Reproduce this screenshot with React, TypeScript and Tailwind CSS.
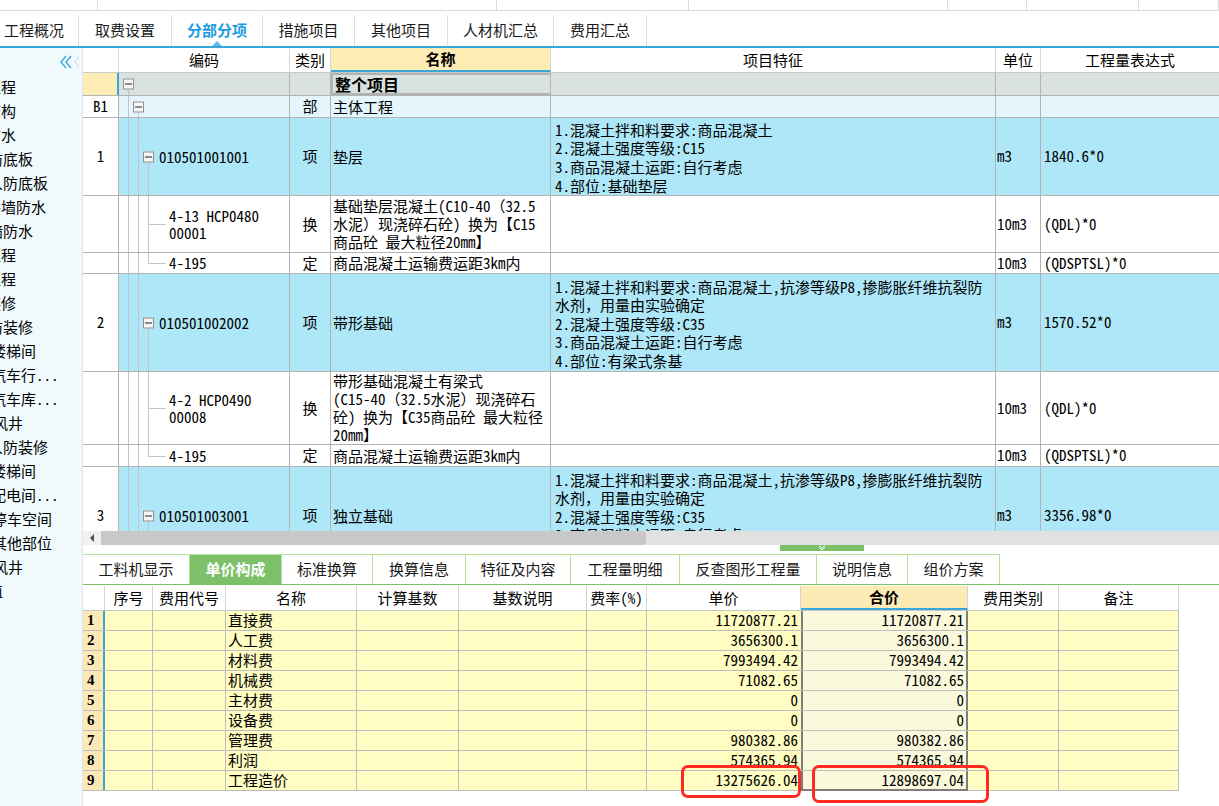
import React from 'react';

const topStrip = ['w-[98px]', 'w-[399px]', 'w-[192px]', 'w-[259px]', 'w-[79px]', 'w-[112px]', 'w-[80px]'];

const topTabs = [
  { label: '工程概况', cls: 'w-[89px] -ml-[10px]' },
  { label: '取费设置', cls: 'w-[93px]' },
  { label: '分部分项', cls: 'w-[91px]', active: true },
  { label: '措施项目', cls: 'w-[92px]' },
  { label: '其他项目', cls: 'w-[93px]' },
  { label: '人材机汇总', cls: 'w-[106px]' },
  { label: '费用汇总', cls: 'w-[93px]' },
];

const sideItems: [string, string][] = [
  ['工程', '-ml-[14px]'], ['结构', '-ml-[14px]'], ['防水', '-ml-[14px]'], ['防底板', '-ml-[12px]'],
  ['人防底板', '-ml-[12px]'], ['外墙防水', '-ml-[14px]'], ['墙防水', '-ml-[12px]'], ['工程', '-ml-[14px]'],
  ['工程', '-ml-[14px]'], ['装修', '-ml-[14px]'], ['防装修', '-ml-[12px]'], ['楼梯间', '-ml-[9px]'],
  ['汽车行...', '-ml-[9px]'], ['汽车库...', '-ml-[9px]'], ['风井', '-ml-[7px]'], ['人防装修', '-ml-[12px]'],
  ['楼梯间', '-ml-[9px]'], ['配电间...', '-ml-[9px]'], ['停车空间', '-ml-[8px]'], ['其他部位', '-ml-[8px]'],
  ['风井', '-ml-[7px]'], ['值', '-ml-[12px]'],
];

const bottomTabs = [
  { label: '工料机显示', w: 'w-[107px]' },
  { label: '单价构成', w: 'w-[92px]', active: true },
  { label: '标准换算', w: 'w-[91px]' },
  { label: '换算信息', w: 'w-[93px]' },
  { label: '特征及内容', w: 'w-[105px]' },
  { label: '工程量明细', w: 'w-[109px]' },
  { label: '反查图形工程量', w: 'w-[137px]' },
  { label: '说明信息', w: 'w-[91px]' },
  { label: '组价方案', w: 'w-[92px]' },
];

const costRows = [
  ['直接费', '11720877.21', '11720877.21'],
  ['人工费', '3656300.1', '3656300.1'],
  ['材料费', '7993494.42', '7993494.42'],
  ['机械费', '71082.65', '71082.65'],
  ['主材费', '0', '0'],
  ['设备费', '0', '0'],
  ['管理费', '980382.86', '980382.86'],
  ['利润', '574365.94', '574365.94'],
  ['工程造价', '13275626.04', '12898697.04'],
];

const featC35 = [
  '1.混凝土拌和料要求:商品混凝土,抗渗等级P8,掺膨胀纤维抗裂防',
  '水剂，用量由实验确定',
  '2.混凝土强度等级:C35',
  '3.商品混凝土运距:自行考虑',
];

type V = 'full' | 'down' | 'up' | null;

function MinusBox({ left }: { left: string }) {
  return (
    <span className={`absolute ${left} top-1/2 -translate-y-1/2 w-[11px] h-[11px] border border-[#8e8e8e] bg-[#f6f6f6] flex items-center justify-center`}>
      <span className="w-[7px] h-px bg-[#222]" />
    </span>
  );
}

function Tree({ v, box, hook, pl, children }: { v: V[]; box?: string; hook?: boolean; pl: string; children?: React.ReactNode }) {
  const xs = ['left-[9px]', 'left-[19px]', 'left-[29px]'];
  return (
    <div className="relative w-[171px] shrink-0 h-full border-r border-[#b3b3b3]">
      {v.map((m, i) =>
        m ? (
          <span
            key={i}
            className={`absolute w-px bg-[#c4c4c4] ${xs[i]} ${m === 'full' ? 'top-0 bottom-0' : m === 'down' ? 'top-1/2 bottom-0' : 'top-0 bottom-1/2'}`}
          />
        ) : null
      )}
      {hook && <span className="absolute left-[29px] top-1/2 w-[18px] h-px bg-[#c4c4c4]" />}
      {box && <MinusBox left={box} />}
      <div className={`h-full flex flex-col justify-center leading-[17.5px] whitespace-nowrap ${pl}`}>{children}</div>
    </div>
  );
}

function Row({
  h, bg, num, numCls = 'bg-white', tree, kind, name, nameCls = '', feat = [], unit = '', expr = '',
}: {
  h: string; bg: string; num: string; numCls?: string; tree: React.ReactNode; kind: string;
  name: React.ReactNode; nameCls?: string; feat?: string[]; unit?: string; expr?: string;
}) {
  return (
    <div className={`flex shrink-0 border-b border-[#b3b3b3] ${h} ${bg}`}>
      <div className={`w-[36px] shrink-0 h-full border-r border-[#b3b3b3] flex items-center justify-center ${numCls}`}>{num}</div>
      {tree}
      <div className="w-[41px] shrink-0 h-full border-r border-[#b3b3b3] flex items-center justify-center">{kind}</div>
      <div className={`w-[220px] shrink-0 h-full border-r border-[#b3b3b3] flex flex-col justify-center pl-[2px] leading-[18px] whitespace-nowrap overflow-hidden ${nameCls}`}>{name}</div>
      <div className="w-[445px] shrink-0 h-full border-r border-[#b3b3b3] flex flex-col justify-center pl-[4px] pt-[3px] leading-[18.6px] whitespace-nowrap overflow-hidden">
        {feat.map((f, i) => (
          <div key={i}>{f}</div>
        ))}
      </div>
      <div className="w-[45px] shrink-0 h-full border-r border-[#b3b3b3] flex items-center pl-[1px]">{unit}</div>
      <div className="w-[200px] shrink-0 h-full flex items-center pl-[3px] whitespace-nowrap">{expr}</div>
    </div>
  );
}

export default function App() {
  return (
    <div className="relative w-[1219px] h-[806px] overflow-hidden bg-white text-[15px] text-black font-['Noto_Sans_Mono_CJK_SC','Noto_Sans_CJK_SC',sans-serif]">
      {/* toolbar remains */}
      <div className="flex h-[11px] border-b border-[#dadada]">
        {topStrip.map((w, i) => (
          <div key={i} className={`${w} h-full border-r border-[#dcdcdc]`} />
        ))}
      </div>

      {/* top tabs */}
      <div className="flex h-[37px] border-b-2 border-[#3aa7db] overflow-hidden">
        {topTabs.map((t) => (
          <div
            key={t.label}
            className={`relative ${t.cls} shrink-0 mt-[4px] h-[31px] border-r border-[#dedede] flex items-center justify-center ${t.active ? 'text-[#1b9ce0] font-bold' : 'text-[#1a1a1a]'}`}
          >
            {t.label}
            {t.active && (
              <span className="absolute bottom-0 left-1/2 -translate-x-1/2 border-x-[5px] border-x-transparent border-b-[5px] border-b-[#5fb9e5]" />
            )}
          </div>
        ))}
      </div>

      <div className="flex h-[758px]">
        {/* left tree panel */}
        <aside className="w-[83px] shrink-0 h-full bg-[#f0fafd] border-r border-[#dde7eb] overflow-hidden pt-[7px]">
          <div className="flex justify-end pr-[1px] h-[14px]">
            <svg width="22" height="14" viewBox="0 0 22 14" fill="none">
              <polyline points="7,1 2,7 7,13" stroke="#3aa7db" strokeWidth="1.4" />
              <polyline points="12,1 7,7 12,13" stroke="#3aa7db" strokeWidth="1.4" />
              <polyline points="20,2 16,7 20,12" stroke="#d3dcdf" strokeWidth="1.2" />
            </svg>
          </div>
          <div className="mt-[6px]">
            {sideItems.map(([txt, ml], i) => (
              <div key={i} className={`h-[24px] leading-[24px] whitespace-nowrap ${ml}`}>
                {txt}
              </div>
            ))}
          </div>
        </aside>

        <main className="flex-1 min-w-0 flex flex-col">
          {/* main grid */}
          <div className="h-[483px] overflow-hidden flex flex-col">
            <div className="flex shrink-0 h-[25px] bg-white border-b border-[#c9c9c9]">
              <div className="w-[36px] shrink-0 border-r border-[#d6d6d6]" />
              <div className="w-[171px] shrink-0 border-r border-[#d6d6d6] flex items-center justify-center">编码</div>
              <div className="w-[41px] shrink-0 border-r border-[#d6d6d6] flex items-center justify-center">类别</div>
              <div className="w-[220px] shrink-0 border-r border-[#d6d6d6] flex items-center justify-center font-bold bg-[#fdedb5] border-b-2 border-b-[#3aa7db]">名称</div>
              <div className="w-[445px] shrink-0 border-r border-[#d6d6d6] flex items-center justify-center">项目特征</div>
              <div className="w-[45px] shrink-0 border-r border-[#d6d6d6] flex items-center justify-center">单位</div>
              <div className="w-[200px] shrink-0 flex items-center justify-center pr-[22px]">工程量表达式</div>
            </div>

            <Row
              h="h-[23px]"
              bg="bg-[#d9e2de]"
              num=""
              numCls="bg-[#fdedb5] border-r-2 border-r-[#3aa7db]"
              tree={<Tree v={['down', null, null]} box="left-[4px]" pl="pl-[40px]" />}
              kind=""
              name="整个项目"
              nameCls="font-bold text-[16px] border-2 border-[#6f6f6f]"
            />
            <Row
              h="h-[22px]"
              bg="bg-[#e4f6fb]"
              num="B1"
              tree={<Tree v={['full', 'down', null]} box="left-[14px]" pl="pl-[40px]" />}
              kind="部"
              name="主体工程"
            />
            <Row
              h="h-[78px]"
              bg="bg-[#aee7f8]"
              num="1"
              tree={<Tree v={['full', 'full', 'down']} box="left-[24px]" pl="pl-[40px]">010501001001</Tree>}
              kind="项"
              name="垫层"
              feat={['1.混凝土拌和料要求:商品混凝土', '2.混凝土强度等级:C15', '3.商品混凝土运距:自行考虑', '4.部位:基础垫层']}
              unit="m3"
              expr="1840.6*0"
            />
            <Row
              h="h-[57px]"
              bg="bg-white"
              num=""
              tree={
                <Tree v={['full', 'full', 'full']} hook pl="pl-[50px]">
                  <div>4-13 HCP0480</div>
                  <div>00001</div>
                </Tree>
              }
              kind="换"
              name={
                <>
                  <div>基础垫层混凝土(C10-40（32.5</div>
                  <div>水泥）现浇碎石砼) 换为【C15</div>
                  <div>商品砼 最大粒径20mm】</div>
                </>
              }
              unit="10m3"
              expr="(QDL)*0"
            />
            <Row
              h="h-[21px]"
              bg="bg-white"
              num=""
              tree={<Tree v={['full', 'full', 'up']} hook pl="pl-[50px]">4-195</Tree>}
              kind="定"
              name="商品混凝土运输费运距3km内"
              unit="10m3"
              expr="(QDSPTSL)*0"
            />
            <Row
              h="h-[98px]"
              bg="bg-[#aee7f8]"
              num="2"
              tree={<Tree v={['full', 'full', 'down']} box="left-[24px]" pl="pl-[40px]">010501002002</Tree>}
              kind="项"
              name="带形基础"
              feat={[...featC35, '4.部位:有梁式条基']}
              unit="m3"
              expr="1570.52*0"
            />
            <Row
              h="h-[73px]"
              bg="bg-white"
              num=""
              tree={
                <Tree v={['full', 'full', 'full']} hook pl="pl-[50px]">
                  <div>4-2 HCP0490</div>
                  <div>00008</div>
                </Tree>
              }
              kind="换"
              name={
                <>
                  <div>带形基础混凝土有梁式</div>
                  <div>(C15-40（32.5水泥）现浇碎石</div>
                  <div>砼) 换为【C35商品砼 最大粒径</div>
                  <div>20mm】</div>
                </>
              }
              unit="10m3"
              expr="(QDL)*0"
            />
            <Row
              h="h-[22px]"
              bg="bg-white"
              num=""
              tree={<Tree v={['full', 'full', 'up']} hook pl="pl-[50px]">4-195</Tree>}
              kind="定"
              name="商品混凝土运输费运距3km内"
              unit="10m3"
              expr="(QDSPTSL)*0"
            />
            <Row
              h="h-[98px]"
              bg="bg-[#aee7f8]"
              num="3"
              tree={<Tree v={['full', 'full', 'down']} box="left-[24px]" pl="pl-[40px]">010501003001</Tree>}
              kind="项"
              name="独立基础"
              feat={[...featC35, '4.部位:独立基础']}
              unit="m3"
              expr="3356.98*0"
            />
          </div>

          {/* horizontal scrollbar */}
          <div className="flex h-[14px] shrink-0 bg-[#e1e1e1]">
            <div className="w-[18px] h-full bg-[#f1f1f1] flex items-center justify-center">
              <span className="border-y-[4px] border-y-transparent border-r-[4px] border-r-[#505050]" />
            </div>
            <div className="w-[545px] h-full bg-[#c8c8c8] rounded-r-[3px]" />
          </div>

          {/* splitter */}
          <div className="h-[9px] shrink-0">
            <div className="ml-[697px] w-[84px] h-[6px] bg-[#7cc169] flex justify-center">
              <svg width="10" height="6" viewBox="0 0 10 6" fill="none">
                <polyline points="2,0.5 5,3 8,0.5" stroke="#ffffff" strokeWidth="1" />
                <polyline points="2,2.5 5,5 8,2.5" stroke="#ffffff" strokeWidth="1" />
              </svg>
            </div>
          </div>

          {/* bottom tabs */}
          <div className="flex h-[31px] shrink-0 border-b border-[#7cc169]">
            {bottomTabs.map((t) => (
              <div
                key={t.label}
                className={`${t.w} shrink-0 h-full flex items-center justify-center border-t border-r border-[#b3e1a1] ${t.active ? 'bg-[#7cc169] text-white font-bold' : 'text-[#1a1a1a]'}`}
              >
                {t.label}
              </div>
            ))}
          </div>

          {/* unit price composition grid */}
          <div className="mt-[1px] w-[1096px]">
            <div className="flex h-[25px] border-b border-[#c6c6c6]">
              <div className="w-[22px] shrink-0 border-r border-[#d4d4d4]" />
              <div className="w-[48px] shrink-0 border-r border-[#d4d4d4] flex items-center justify-center">序号</div>
              <div className="w-[73px] shrink-0 border-r border-[#d4d4d4] flex items-center justify-center">费用代号</div>
              <div className="w-[131px] shrink-0 border-r border-[#d4d4d4] flex items-center justify-center">名称</div>
              <div className="w-[102px] shrink-0 border-r border-[#d4d4d4] flex items-center justify-center">计算基数</div>
              <div className="w-[128px] shrink-0 border-r border-[#d4d4d4] flex items-center justify-center">基数说明</div>
              <div className="w-[60px] shrink-0 border-r border-[#d4d4d4] flex items-center justify-center whitespace-nowrap">费率(%)</div>
              <div className="w-[154px] shrink-0 border-r border-[#d4d4d4] flex items-center justify-center">单价</div>
              <div className="w-[167px] shrink-0 border-r border-[#d4d4d4] flex items-center justify-center font-bold bg-[#fdebb5] border-b-2 border-b-[#3aa7db]">合价</div>
              <div className="w-[91px] shrink-0 border-r border-[#d4d4d4] flex items-center justify-center">费用类别</div>
              <div className="w-[120px] shrink-0 border-r border-[#d4d4d4] flex items-center justify-center">备注</div>
            </div>
            {costRows.map(([name, unit, total], i) => (
              <div key={i} className="flex h-[20px] bg-[#fffdc2] border-b border-[#bdbdbd]">
                <div className="w-[22px] shrink-0 h-full bg-[#fde8b8] border-r-2 border-r-[#3aa3d8] pl-[4px] flex items-center font-bold font-['Liberation_Serif',serif]">
                  {i + 1}
                </div>
                <div className="w-[48px] shrink-0 border-r border-[#bdbdbd]" />
                <div className="w-[73px] shrink-0 border-r border-[#bdbdbd]" />
                <div className="w-[131px] shrink-0 border-r border-[#bdbdbd] pl-[2px] flex items-center">{name}</div>
                <div className="w-[102px] shrink-0 border-r border-[#bdbdbd]" />
                <div className="w-[128px] shrink-0 border-r border-[#bdbdbd]" />
                <div className="w-[60px] shrink-0 border-r border-[#bdbdbd]" />
                <div className="w-[154px] shrink-0 flex items-center justify-end pr-[3px]">{unit}</div>
                <div className={`w-[167px] shrink-0 bg-[#fbf9dc] border-x-2 border-[#7d7d7d] flex items-center justify-end pr-[2px] ${i === costRows.length - 1 ? 'border-b-2 -mb-px' : ''}`}>
                  {total}
                </div>
                <div className="w-[91px] shrink-0 border-r border-[#bdbdbd]" />
                <div className="w-[120px] shrink-0 border-r border-[#bdbdbd]" />
              </div>
            ))}
          </div>
        </main>
      </div>

      {/* red annotation marks */}
      <div className="absolute left-[681px] top-[765px] w-[120px] h-[33px] border-[3px] border-[#ff2a1f] rounded-[7px]" />
      <div className="absolute left-[812px] top-[765px] w-[177px] h-[38px] border-[3px] border-[#ff2a1f] rounded-[7px]" />
    </div>
  );
}
